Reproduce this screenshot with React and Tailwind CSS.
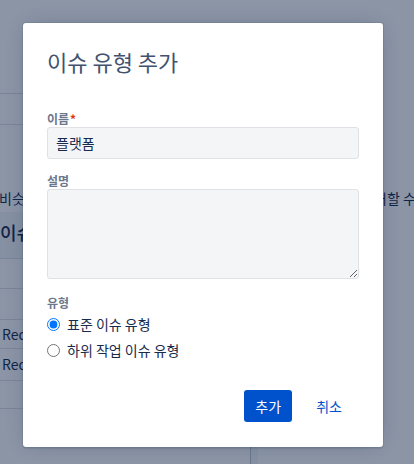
import { useState } from "react";

export default function App() {
    const [kind, setKind] = useState("standard");

    return (
        <div className="relative w-[414px] h-[464px] overflow-hidden bg-white font-['Noto_Sans_CJK_KR','Noto_Sans',sans-serif] text-[#172b4d]">
            {/* Page behind the dialog */}
            <div className="flex h-full">
                <div className="w-[250px] shrink-0">
                    <div className="h-[93px]" />
                    <div className="h-[32px] border-y border-[#dfe1e6]" />
                    <div className="h-[87px]" />
                    <div className="h-[47px] bg-[#f4f5f7] border-b border-[#dfe1e6] pt-[8px] text-[18px] leading-[24px] font-medium">
                        이슈 유형 체계
                    </div>
                    <div className="h-[30px] border-b border-[#dfe1e6]" />
                    <div className="h-[31px] border-b border-[#dfe1e6]" />
                    <div className="h-[29px] border-b border-[#dfe1e6] flex items-center text-[14px] pl-[2px]">Request</div>
                    <div className="h-[32px] border-b border-[#dfe1e6] flex items-center text-[14px] pl-[2px]">Request</div>
                    <div className="h-[28px] border-b border-[#dfe1e6]" />
                </div>
                <div className="w-[8px] shrink-0 flex flex-col">
                    <div className="h-[380px]" />
                    <div className="flex-1 border-l border-[#c1c7d0] bg-[#f4f5f7]" />
                </div>
                <div className="flex-1" />
            </div>

            {/* Sentence running under the dialog */}
            <div className="absolute left-0 top-[188px] w-[414px] flex text-[14px] leading-[20px] whitespace-nowrap overflow-hidden">
                <span className="w-[375px] shrink-0 overflow-hidden -ml-[1px]">비슷한 작업을 묶어서</span>
                <span>거할 수 있습니다</span>
            </div>

            {/* Blanket */}
            <div className="absolute inset-0 bg-[rgba(9,30,66,0.47)]" />

            {/* Dialog */}
            <div className="absolute left-[23px] top-[23px] w-[360px] h-[424px] bg-white rounded-[3px] shadow-[0_0_0_1px_rgba(9,30,66,0.08),0_2px_1px_rgba(9,30,66,0.08),0_0_20px_-6px_rgba(9,30,66,0.31)] px-[24px] pt-[24px]">
                <h2 className="text-[22px] leading-[28px] font-normal text-[#42526e]">이슈 유형 추가</h2>

                <div className="mt-[36px] flex flex-col">
                    {/* Name */}
                    <label className="text-[12px] leading-[16px] font-semibold text-[#6b778c]">
                        이름<span className="text-[#de350b] ml-[1px]">*</span>
                    </label>
                    <input
                        type="text"
                        defaultValue="플랫폼"
                        className="h-[32px] w-full rounded-[3px] border border-[#dfe1e6] bg-[#f4f5f7] px-[8px] text-[14px] text-[#172b4d] outline-none"
                    />

                    {/* Description */}
                    <label className="mt-[14px] text-[12px] leading-[16px] font-semibold text-[#6b778c]">설명</label>
                    <textarea className="h-[90px] w-full rounded-[3px] border border-[#dfe1e6] bg-[#f4f5f7] px-[8px] py-[6px] text-[14px] outline-none" />

                    {/* Type */}
                    <label className="mt-[16px] text-[12px] leading-[16px] font-semibold text-[#6b778c]">유형</label>
                    <div className="mt-[3px] flex flex-col gap-[6px]">
                        <label className="flex items-center gap-[7px] h-[20px] text-[14px] text-[#172b4d]">
                            <input
                                type="radio"
                                name="kind"
                                checked={kind === "standard"}
                                onChange={() => setKind("standard")}
                                className="m-0 w-[13px] h-[13px]"
                            />
                            표준 이슈 유형
                        </label>
                        <label className="flex items-center gap-[7px] h-[20px] text-[14px] text-[#172b4d]">
                            <input
                                type="radio"
                                name="kind"
                                checked={kind === "subtask"}
                                onChange={() => setKind("subtask")}
                                className="m-0 w-[13px] h-[13px]"
                            />
                            하위 작업 이슈 유형
                        </label>
                    </div>

                    {/* Footer */}
                    <div className="mt-[30px] flex justify-end gap-[12px] pr-[5px]">
                        <button className="h-[32px] w-[48px] rounded-[3px] bg-[#0052cc] text-white text-[14px]">추가</button>
                        <button className="h-[32px] px-[12px] rounded-[3px] text-[#0052cc] text-[14px]">취소</button>
                    </div>
                </div>
            </div>
        </div>
    );
}
